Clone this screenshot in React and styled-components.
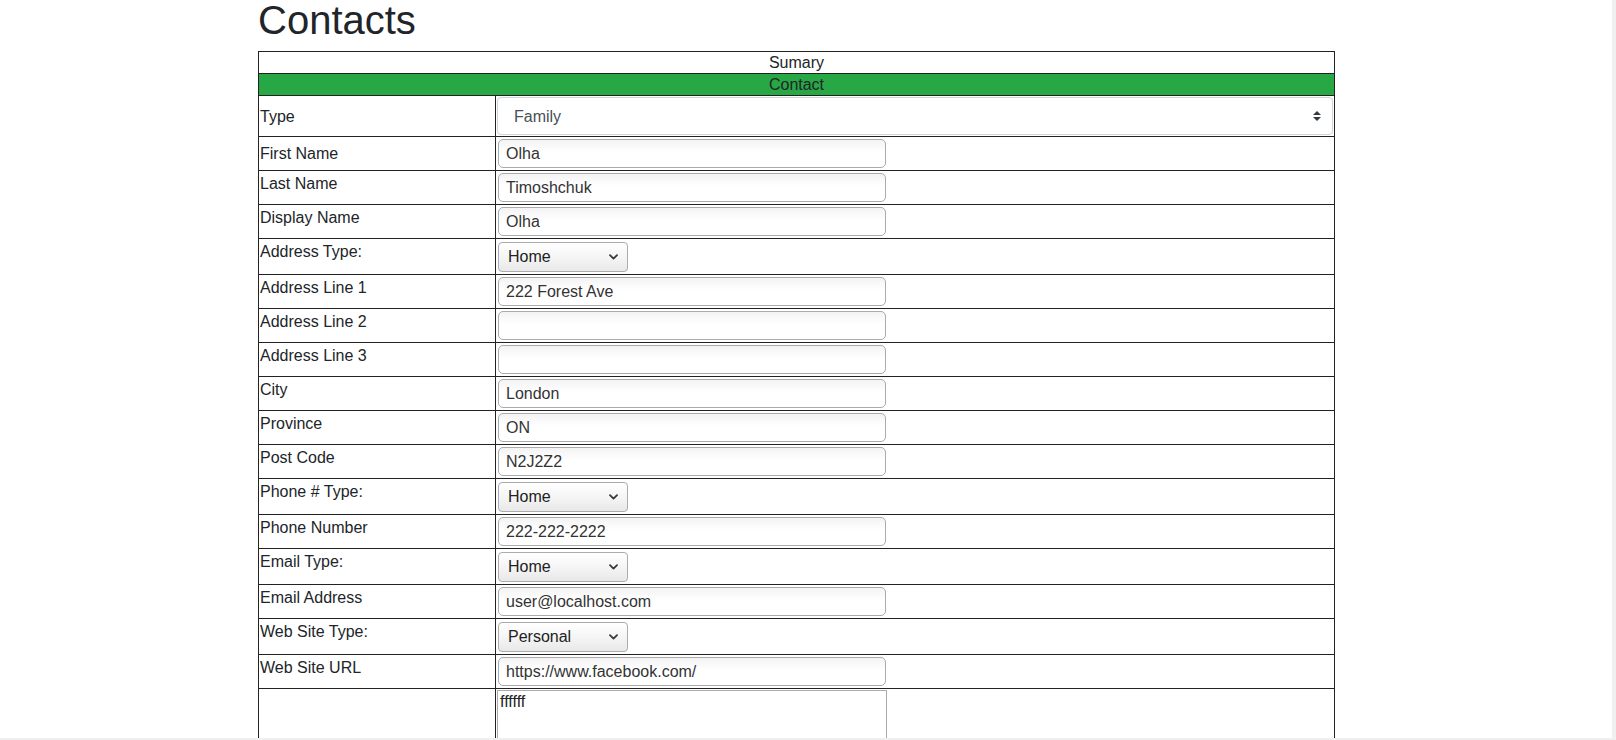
import React from 'react';
import styled, { createGlobalStyle } from 'styled-components';

const GlobalStyle = createGlobalStyle`
  * { box-sizing: border-box; }
  html { background: #f0f0f0; }
  body {
    margin: 0;
    font-family: "Liberation Sans", Arial, sans-serif;
    font-size: 16px;
    color: #212529;
  }
`;

const Frame = styled.div`
  width: 1612px;
  height: 738px;
  background: #fff;
  overflow: hidden;
  padding-left: 258px;
`;

const Heading = styled.h1`
  margin: 0 0 11px;
  font-size: 40px;
  line-height: 40px;
  font-weight: 500;
  color: #212529;
`;

const Table = styled.table`
  width: 1077px;
  border-collapse: separate;
  border-spacing: 0;
  border-top: 1px solid #222;
  border-left: 1px solid #222;
`;

const HeadCell = styled.th`
  padding: 1px;
  line-height: 19px;
  font-weight: 400;
  text-align: center;
  color: #212529;
  background: ${(p) => (p.$green ? '#28a745' : '#fff')};
  border-right: 1px solid #222;
  border-bottom: 1px solid #222;
`;

const LabelCell = styled.td`
  width: 237px;
  padding: ${(p) => (p.$middle ? '2px 1px 1px' : '1px')};
  line-height: 24px;
  vertical-align: ${(p) => (p.$middle ? 'middle' : 'top')};
  border-right: 1px solid #222;
  border-bottom: 1px solid #222;
`;

const ValueCell = styled.td`
  padding: 1px;
  vertical-align: top;
  border-right: 1px solid #222;
  border-bottom: 1px solid #222;
`;

const TextInput = styled.input`
  display: block;
  width: 388px;
  height: 29px;
  margin: 1px;
  padding: 0 7px;
  border: 1px solid #ababab;
  border-radius: 5px;
  background: linear-gradient(to bottom, #f3f3f3 0%, #ffffff 45%, #ffffff 100%);
  font-family: "Liberation Sans", Arial, sans-serif;
  font-size: 16px;
  color: #333;
  outline: none;
`;

const TypeSelectWrap = styled.div`
  position: relative;
  width: 100%;
`;

const TypeSelect = styled.select`
  display: block;
  width: 100%;
  height: 38px;
  margin: 0;
  padding: 0 28px 0 16px;
  border: 1px solid #ced4da;
  border-radius: 4px;
  background: #fff;
  appearance: none;
  -webkit-appearance: none;
  font-family: "Liberation Sans", Arial, sans-serif;
  font-size: 16px;
  color: #495057;
  outline: none;
`;

const SortIcon = styled.svg`
  position: absolute;
  right: 12px;
  top: 50%;
  transform: translateY(-50%);
  pointer-events: none;
`;

const SmallSelectWrap = styled.div`
  position: relative;
  width: 130px;
  margin: 2px 1px 1px;
`;

const SmallSelect = styled.select`
  display: block;
  width: 100%;
  height: 30px;
  margin: 0;
  padding: 0 24px 1px 9px;
  border: 1px solid #ababab;
  border-radius: 4px;
  background: linear-gradient(to bottom, #ffffff 0%, #f4f4f4 55%, #e8e8e8 100%);
  appearance: none;
  -webkit-appearance: none;
  font-family: "Liberation Sans", Arial, sans-serif;
  font-size: 16px;
  color: #222;
  outline: none;
`;

const Chevron = styled.svg`
  position: absolute;
  right: 10px;
  top: 50%;
  transform: translateY(-50%);
  pointer-events: none;
`;

const Notes = styled.textarea`
  display: block;
  width: 390px;
  height: 110px;
  margin: 0;
  padding: 2px;
  border: 1px solid #ababab;
  font-family: "Liberation Sans", Arial, sans-serif;
  font-size: 16px;
  line-height: 18px;
  color: #222;
  background: #fff;
  resize: vertical;
  outline: none;
`;

const rows = [
  { label: 'First Name', kind: 'input', value: 'Olha', middle: true },
  { label: 'Last Name', kind: 'input', value: 'Timoshchuk' },
  { label: 'Display Name', kind: 'input', value: 'Olha' },
  { label: 'Address Type:', kind: 'select', value: 'Home', options: ['Home', 'Work', 'Other'] },
  { label: 'Address Line 1', kind: 'input', value: '222 Forest Ave' },
  { label: 'Address Line 2', kind: 'input', value: '' },
  { label: 'Address Line 3', kind: 'input', value: '' },
  { label: 'City', kind: 'input', value: 'London' },
  { label: 'Province', kind: 'input', value: 'ON' },
  { label: 'Post Code', kind: 'input', value: 'N2J2Z2' },
  { label: 'Phone # Type:', kind: 'select', value: 'Home', options: ['Home', 'Work', 'Mobile'] },
  { label: 'Phone Number', kind: 'input', value: '222-222-2222' },
  { label: 'Email Type:', kind: 'select', value: 'Home', options: ['Home', 'Work', 'Other'] },
  { label: 'Email Address', kind: 'input', value: 'user@localhost.com' },
  { label: 'Web Site Type:', kind: 'select', value: 'Personal', options: ['Personal', 'Work', 'Other'] },
  { label: 'Web Site URL', kind: 'input', value: 'https://www.facebook.com/' },
];

function ChevronIcon() {
  return (
    <Chevron width="9" height="6" viewBox="0 0 9 6" aria-hidden="true">
      <path d="M1 1.2l3.5 3.4L8 1.2" fill="none" stroke="#3a3a3a" strokeWidth="1.8" strokeLinecap="round" strokeLinejoin="round" />
    </Chevron>
  );
}

function Field({ row }) {
  if (row.kind === 'select') {
    return (
      <SmallSelectWrap>
        <SmallSelect defaultValue={row.value}>
          {row.options.map((o) => (
            <option key={o} value={o}>{o}</option>
          ))}
        </SmallSelect>
        <ChevronIcon />
      </SmallSelectWrap>
    );
  }
  return <TextInput type="text" defaultValue={row.value} />;
}

export default function App() {
  return (
    <>
      <GlobalStyle />
      <Frame>
        <Heading>Contacts</Heading>
        <Table>
          <tbody>
            <tr>
              <HeadCell colSpan={2}>Sumary</HeadCell>
            </tr>
            <tr>
              <HeadCell colSpan={2} $green>Contact</HeadCell>
            </tr>
            <tr>
              <LabelCell $middle>Type</LabelCell>
              <ValueCell>
                <TypeSelectWrap>
                  <TypeSelect defaultValue="Family">
                    <option value="Family">Family</option>
                    <option value="Friend">Friend</option>
                    <option value="Business">Business</option>
                  </TypeSelect>
                  <SortIcon width="8" height="10" viewBox="0 0 4 5" aria-hidden="true">
                    <path fill="#343a40" d="M2 0L0 2h4zm0 5L0 3h4z" />
                  </SortIcon>
                </TypeSelectWrap>
              </ValueCell>
            </tr>
            {rows.map((row) => (
              <tr key={row.label}>
                <LabelCell $middle={row.middle}>{row.label}</LabelCell>
                <ValueCell>
                  <Field row={row} />
                </ValueCell>
              </tr>
            ))}
            <tr>
              <LabelCell />
              <ValueCell>
                <Notes defaultValue="ffffff" />
              </ValueCell>
            </tr>
          </tbody>
        </Table>
      </Frame>
    </>
  );
}
